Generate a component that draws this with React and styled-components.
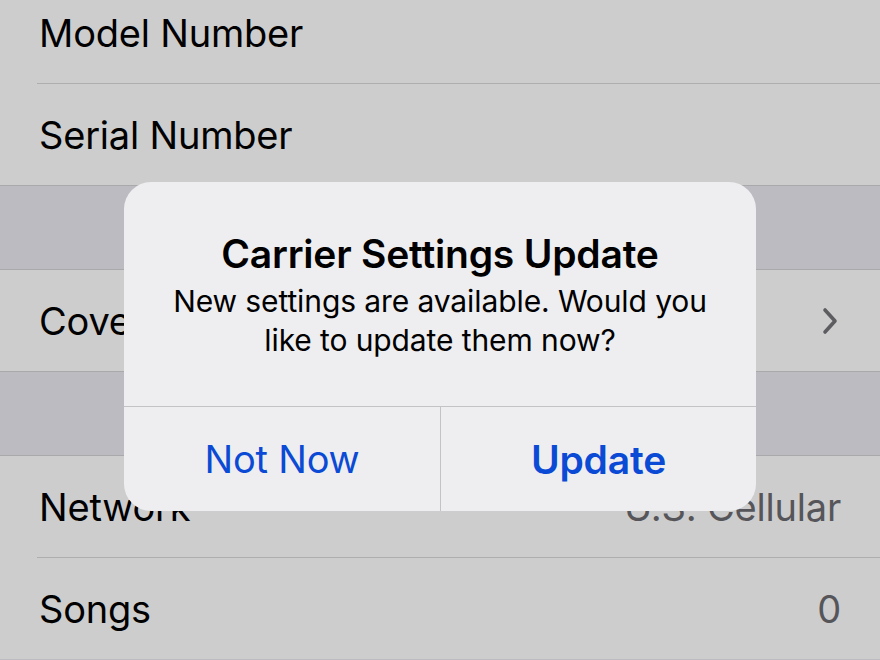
import React from "react";
import styled, { createGlobalStyle } from "styled-components";

const Global = createGlobalStyle`
  html, body { margin: 0; padding: 0; }
  body {
    width: 880px; height: 660px; overflow: hidden;
    background: #bcbbc1;
    font-family: Inter, "Helvetica Neue", Arial, sans-serif;
    -webkit-font-smoothing: antialiased;
  }
`;

const Screen = styled.div`
  position: relative;
  width: 880px;
  height: 660px;
  overflow: hidden;
  background: #bcbbc1;
`;

const List = styled.div`
  display: flex;
  flex-direction: column;
  margin-top: -18px;
`;

const Group = styled.div`
  display: flex;
  flex-direction: column;
  background: #cdcdcd;
  border-top: ${(p) => (p.$noTop ? "none" : "1px solid #a9a9ab")};
  border-bottom: ${(p) => (p.$noBottom ? "none" : "1px solid #a9a9ab")};
`;

const Gap = styled.div`
  height: 83px;
`;

const Row = styled.div`
  height: 101px;
  display: flex;
  align-items: center;
  justify-content: space-between;
  padding: 0 39px;
  & + & {
    border-top: 1px solid #aeaeb0;
    margin-left: 37px;
    padding-left: 2px;
  }
`;

const Label = styled.span`
  font-size: 38px;
  color: #000;
  letter-spacing: -0.2px;
`;

const Value = styled.span`
  font-size: 38px;
  color: #56565a;
  letter-spacing: -0.2px;
`;

const Chevron = () => (
  <svg width="18" height="30" viewBox="0 0 18 30" style={{ marginRight: 2 }}>
    <path d="M4 4 L14 15 L4 26" fill="none" stroke="#5d5d61" strokeWidth="3.6" strokeLinecap="round" strokeLinejoin="round" />
  </svg>
);

const Dialog = styled.div`
  position: absolute;
  left: 124px;
  top: 182px;
  width: 632px;
  height: 329px;
  border-radius: 27px;
  background: #eeeef0;
  overflow: hidden;
  display: flex;
  flex-direction: column;
`;

const DialogBody = styled.div`
  height: 225px;
  box-sizing: border-box;
  padding: 49px 20px 0;
  display: flex;
  flex-direction: column;
  align-items: center;
  text-align: center;
  border-bottom: 1px solid #c3c3c6;
`;

const Title = styled.div`
  font-size: 39px;
  font-weight: 600;
  color: #000;
  line-height: 46px;
  letter-spacing: -0.2px;
  white-space: nowrap;
`;

const Message = styled.div`
  font-size: 30px;
  color: #000;
  line-height: 39px;
  margin-top: 5px;
  letter-spacing: -0.1px;
  white-space: nowrap;
`;

const Buttons = styled.div`
  flex: 1;
  display: grid;
  grid-template-columns: 1fr 1fr;
`;

const Button = styled.div`
  display: flex;
  align-items: center;
  justify-content: center;
  font-size: ${(p) => (p.$bold ? 39 : 38)}px;
  color: #0b4ad5;
  font-weight: ${(p) => (p.$bold ? 600 : 400)};
  letter-spacing: -0.2px;
  & + & {
    border-left: 1px solid #c3c3c6;
  }
`;

export default function App() {
  return (
    <Screen>
      <Global />
      <List>
        <Group $noTop>
          <Row><Label>Model Number</Label></Row>
          <Row><Label>Serial Number</Label></Row>
        </Group>
        <Gap />
        <Group>
          <Row><Label>Coverage</Label><Chevron /></Row>
        </Group>
        <Gap />
        <Group $noBottom>
          <Row><Label>Network</Label><Value>U.S. Cellular</Value></Row>
          <Row><Label>Songs</Label><Value>0</Value></Row>
        </Group>
      </List>
      <Dialog>
        <DialogBody>
          <Title>Carrier Settings Update</Title>
          <Message>
            New settings are available. Would you
            <br />
            like to update them now?
          </Message>
        </DialogBody>
        <Buttons>
          <Button>Not Now</Button>
          <Button $bold>Update</Button>
        </Buttons>
      </Dialog>
    </Screen>
  );
}
